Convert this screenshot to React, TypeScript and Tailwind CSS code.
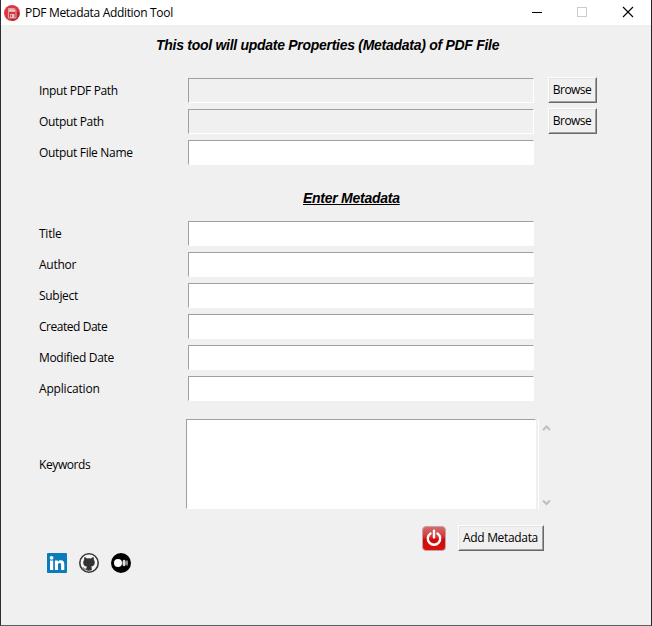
import React from "react";

const field =
  "h-[25px] w-[346px] border border-t-[#a0a0a0] border-l-[#a0a0a0] border-r-white border-b-white outline-none";

interface RowProps {
  label: string;
  tracking: string;
  readOnly?: boolean;
  children?: React.ReactNode;
}

function Row({ label, tracking, readOnly, children }: RowProps) {
  return (
    <div className="flex h-[31px] items-start pl-[38px]">
      <label className={`w-[149px] shrink-0 whitespace-nowrap pt-[4px] leading-[18px] ${tracking}`}>{label}</label>
      <input aria-label={label} readOnly={readOnly} className={`${field} ${readOnly ? "bg-[#f0f0f0]" : "bg-white"}`} />
      {children}
    </div>
  );
}

function Button({ children, className }: { children: React.ReactNode; className: string }) {
  return (
    <button
      className={`h-[26px] shrink-0 border border-t-white border-l-white border-r-[#696969] border-b-[#696969] bg-[#f0f0f0] ${className}`}
    >
      <span className="flex h-full items-center justify-center whitespace-nowrap border border-t-[#e3e3e3] border-l-[#e3e3e3] border-r-[#a0a0a0] border-b-[#a0a0a0] pb-px pr-px">
        {children}
      </span>
    </button>
  );
}

function AppIcon() {
  return (
    <svg width="16" height="16" viewBox="0 0 16 16" className="shrink-0">
      <circle cx="8" cy="8" r="8" fill="#dc3a42" />
      <path d="M12 4l3.6 4.4A8 8 0 0 1 8.5 16L4.5 13z" fill="#b52833" />
      <path d="M4.500 3.500h6l1.500 1.600v7.900H4.500z" fill="#cf3b44" stroke="#e9a9ad" strokeWidth=".9" />
      <path d="M5 4.300h5.200l1 1.200v1.300H5z" fill="#efcdcf" />
      <path d="M6.200 9h4.200v4H6.200z" fill="#efc3c6" />
      <path d="M7.400 9.800v2.200" stroke="#c53640" strokeWidth="1" />
    </svg>
  );
}

function LinkedInIcon() {
  return (
    <svg width="20" height="20" viewBox="0 0 20 20">
      <rect width="20" height="20" rx="1" fill="#0a7cb9" />
      <circle cx="4.6" cy="4.8" r="1.9" fill="white" />
      <path
        d="M3 7.500h3.200v9.500H3zM7.900 7.500h3v1.300c.5-.9 1.500-1.600 2.900-1.600 2.800 0 3.500 1.800 3.500 4.300V17h-3.200v-4.800c0-1.200 0-2.300-1.500-2.300s-1.600 1.100-1.600 2.300V17H7.900z"
        fill="white"
      />
    </svg>
  );
}

function GitHubIcon() {
  return (
    <svg width="20" height="20" viewBox="0 0 20 20">
      <circle cx="10" cy="10" r="9.200" fill="#f5f5f5" stroke="#3a3a3a" strokeWidth="1.600" />
      <path
        d="M5.300 4.300c1 0 2 .5 2.700 1.100a9 9 0 0 1 4 0c.7-.6 1.700-1.100 2.700-1.100.3.900.3 1.700.1 2.400.7.8 1 1.600 1 2.700 0 2.800-1.700 3.700-3.700 4 .4.400.6.900.6 1.600v2.300a9 9 0 0 1-5.400 0v-.7c-2 .3-2.500-.5-3-1.400-.2-.4-.5-.7-.9-.9.900-.2 1.400.3 1.800.9.500.7 1.100.8 2.100.5.100-.9.300-1.400.6-2.300-2.200-.3-3.700-1.200-3.700-4 0-1.100.4-1.900 1-2.700-.2-.7-.2-1.500.1-2.400z"
        fill="#333"
      />
    </svg>
  );
}

function MediumIcon() {
  return (
    <svg width="20" height="20" viewBox="0 0 20 20">
      <circle cx="10" cy="10" r="10" fill="black" />
      <circle cx="7" cy="10" r="4" fill="white" />
      <ellipse cx="13.100" cy="10" rx="1.600" ry="3.300" fill="#dedede" />
      <ellipse cx="16" cy="10" rx=".8" ry="3" fill="#b9b9b9" />
    </svg>
  );
}

function PowerIcon() {
  return (
    <svg width="24" height="25" viewBox="0 0 24 25">
      <defs>
        <linearGradient id="red" x1="0" y1="0" x2="0" y2="1">
          <stop offset="0" stopColor="#cf7070" />
          <stop offset=".4" stopColor="#d63a3a" />
          <stop offset=".55" stopColor="#cc0a0a" />
          <stop offset="1" stopColor="#dc1010" />
        </linearGradient>
      </defs>
      <rect x=".5" y=".5" width="23" height="24" rx="3.500" fill="url(#red)" stroke="#c9a3a3" />
      <path d="M8.500 7.400a6.200 6.200 0 1 0 7 0" fill="none" stroke="white" strokeWidth="2.400" strokeLinecap="round" />
      <path d="M12 4.800v6.600" stroke="white" strokeWidth="2.400" strokeLinecap="round" />
    </svg>
  );
}

export default function App() {
  return (
    <div className="flex h-[626px] w-[652px] flex-col border-x border-b border-l-[#2b2e32] border-r-[#20262a] border-b-[#59605f] bg-[#f0f0f0] font-['Open_Sans','Noto_Sans',sans-serif] text-[12px] text-black">
      <header className="flex h-[25px] shrink-0 items-center bg-white pl-[3px]">
        <AppIcon />
        <span className="grow whitespace-nowrap pl-[5px] leading-[18px] tracking-[-0.32px]">
          PDF Metadata Addition Tool
        </span>
        <svg width="120" height="25" viewBox="0 0 120 25" fill="none" shapeRendering="crispEdges">
          <path d="M1 12.500h10" stroke="black" />
          <rect x="46.500" y="7.500" width="9" height="9" stroke="#ccc" />
          <path d="M92 7l10 10M102 7l-10 10" stroke="black" strokeWidth="1.100" shapeRendering="auto" />
        </svg>
      </header>

      <h1 className="h-[53px] shrink-0 whitespace-nowrap pl-[155px] pt-[11px] font-['Liberation_Sans',sans-serif] text-[14px] font-bold italic leading-[18px] tracking-[-0.28px]">
        This tool will update Properties (Metadata) of PDF File
      </h1>

      <Row label="Input PDF Path" tracking="tracking-[-0.34px]" readOnly>
        <Button className="-mt-px ml-[14px] w-[49px] tracking-[-0.55px]">Browse</Button>
      </Row>
      <Row label="Output Path" tracking="tracking-[-0.34px]" readOnly>
        <Button className="-mt-px ml-[14px] w-[49px] tracking-[-0.55px]">Browse</Button>
      </Row>
      <Row label="Output File Name" tracking="tracking-[-0.32px]" />

      <h2 className="h-[50px] shrink-0 whitespace-nowrap pl-[302px] pt-[18px] font-['Liberation_Sans',sans-serif] text-[14px] font-bold italic leading-[18px] tracking-[-0.26px] underline">
        Enter Metadata
      </h2>

      <Row label="Title" tracking="tracking-[-0.25px]" />
      <Row label="Author" tracking="tracking-[-0.25px]" />
      <Row label="Subject" tracking="tracking-[-0.3px]" />
      <Row label="Created Date" tracking="tracking-[-0.46px]" />
      <Row label="Modified Date" tracking="tracking-[-0.32px]" />
      <Row label="Application" tracking="tracking-[-0.18px]" />

      <div className="mt-[12px] flex h-[91px] shrink-0 items-start pl-[38px]">
        <label className="w-[147px] shrink-0 pt-[37px] leading-[18px] tracking-[-0.4px]">Keywords</label>
        <textarea
          aria-label="Keywords"
          className="h-[90px] w-[350px] resize-none border border-b-white border-l-[#a0a0a0] border-r-white border-t-[#a0a0a0] bg-white outline-none"
        />
        <div className="ml-[2px] flex h-[91px] w-[16px] flex-col items-center justify-between border-l border-white pb-[3px] pt-[5px]">
          <svg width="9" height="8" viewBox="0 0 9 8" fill="none" stroke="#bfbfbf" strokeWidth="2">
            <path d="M1 6l3.500-3.500L8 6" />
          </svg>
          <svg width="9" height="8" viewBox="0 0 9 8" fill="none" stroke="#bfbfbf" strokeWidth="2">
            <path d="M1 1.500L4.500 5 8 1.500" />
          </svg>
        </div>
      </div>

      <div className="mt-[15px] flex h-[28px] shrink-0 items-start pl-[421px]">
        <button aria-label="Exit" className="mt-px">
          <PowerIcon />
        </button>
        <Button className="ml-[12px] w-[86px] tracking-[-0.33px]">Add Metadata</Button>
      </div>

      <footer className="flex gap-[12px] pl-[46px]">
        <LinkedInIcon />
        <GitHubIcon />
        <MediumIcon />
      </footer>
    </div>
  );
}
